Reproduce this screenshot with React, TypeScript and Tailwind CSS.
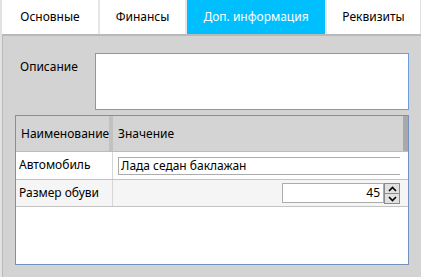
import { useState } from "react";

type Tab = { id: string; label: string; width: string };

const tabs: Tab[] = [
  { id: "main", label: "Основные", width: "w-[96px]" },
  { id: "fin", label: "Финансы", width: "w-[87px]" },
  { id: "extra", label: "Доп. информация", width: "w-[140px]" },
  { id: "req", label: "Реквизиты", width: "w-[95px]" },
];

function Spinner() {
  return (
    <div className="flex w-[16px] flex-col gap-[1px] bg-[#8c8c8c] p-[1px]">
      <button type="button" className="flex h-[9px] items-center justify-center bg-[#e1e1e1]">
        <svg width="9" height="6" viewBox="0 0 9 6">
          <path d="M1 5 L4.5 1.5 L8 5" fill="none" stroke="#000" strokeWidth="1.6" />
        </svg>
      </button>
      <button type="button" className="flex h-[9px] items-center justify-center bg-[#e1e1e1]">
        <svg width="9" height="6" viewBox="0 0 9 6">
          <path d="M1 1 L4.5 4.5 L8 1" fill="none" stroke="#000" strokeWidth="1.6" />
        </svg>
      </button>
    </div>
  );
}

export default function App() {
  const [active, setActive] = useState("extra");
  const [car, setCar] = useState("Лада седан баклажан");

  return (
    <div className="flex h-[277px] w-[421px] flex-col bg-[#e2e2e2] pl-[2px] font-['Noto_Sans',sans-serif] text-[12px] text-black">
      {/* вкладки */}
      <div className="flex h-[34px] shrink-0">
        {tabs.map((t, i) => (
          <button
            key={t.id}
            type="button"
            onClick={() => setActive(t.id)}
            className={`${t.width} flex items-center justify-center ${
              i > 0 ? "border-l-2 border-[#e6e6e6]" : ""
            } ${active === t.id ? "bg-[#00bfff] text-white" : "bg-white text-black"}`}
          >
            {t.label}
          </button>
        ))}
      </div>

      <div className="flex flex-1 flex-col border-t-2 border-l border-[#b9b9b9] bg-[#d3d3d3] px-[12px] pt-[17px] pb-[12px]">
        <div className="flex h-[57px] shrink-0">
          <div className="w-[80px] pl-[5px] pt-[5px]">Описание</div>
          <div className="flex-1 border border-[#6b9ce0] bg-white" />
        </div>

        {/* таблица свойств */}
        <div className="mt-[5px] flex flex-1 flex-col border border-[#7391bc] bg-white">
          <div className="flex h-[36px] shrink-0 border-b border-[#bcbcbc] bg-[#d4d4d4]">
            <div className="flex w-[93px] items-center pl-[5px]">Наименование</div>
            <div className="w-[4px] bg-[#c1c1c1]" />
            <div className="flex flex-1 items-center pl-[5px]">Значение</div>
            <div className="w-[5px] bg-[#a9a9a9]" />
          </div>

          <div className="flex h-[28px] shrink-0 border-b border-[#c3c3c3]">
            <div className="w-[97px] border-r border-[#d6d6d6] pl-[3px] pt-[4px]">Автомобиль</div>
            <div className="flex flex-1 items-center pl-[5px] pr-[8px]">
              <input
                value={car}
                onChange={(e) => setCar(e.target.value)}
                className="h-[18px] w-full border-y border-l border-[#acacac] bg-white pl-[2px] outline-none"
              />
            </div>
          </div>

          <div className="flex h-[27px] shrink-0 border-b border-[#c3c3c3] bg-[#f5f5f5]">
            <div className="flex w-[97px] items-center border-r border-[#d6d6d6] pl-[3px]">Размер обуви</div>
            <div className="flex flex-1 items-center justify-end pr-[8px]">
              <div className="flex h-[20px] w-[102px] items-center justify-end border border-[#acacac] bg-white pr-[3px]">
                45
              </div>
              <div className="h-[20px]">
                <Spinner />
              </div>
            </div>
          </div>

          <div className="flex-1" />
        </div>
      </div>
    </div>
  );
}
